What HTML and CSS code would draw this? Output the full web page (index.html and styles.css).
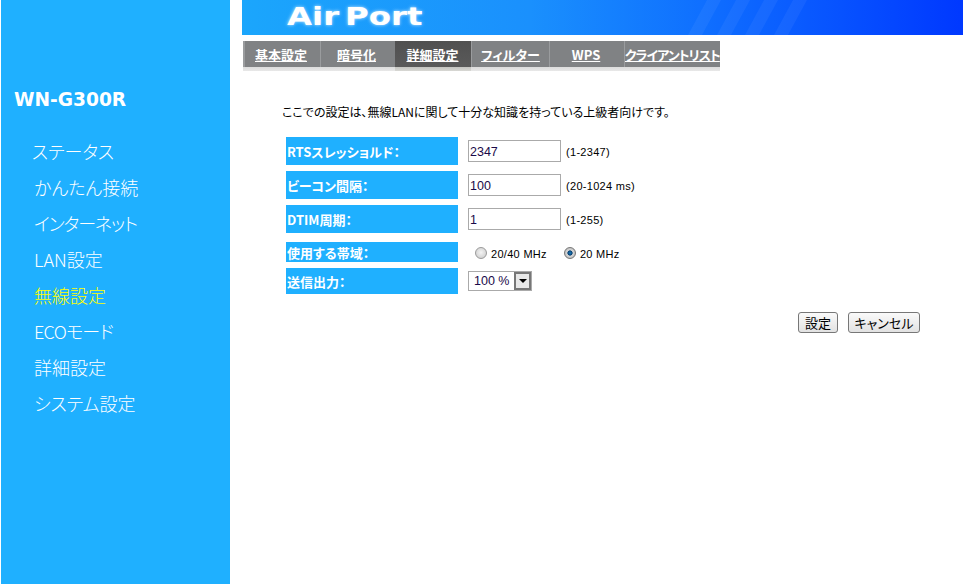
FILE: index.html
```html
<!DOCTYPE html>
<html lang="ja">
<head>
<meta charset="utf-8">
<title>WN-G300R</title>
<link rel="stylesheet" href="styles.css">
</head>
<body>
<aside class="sidebar">
  <h1 class="model">WN-G300R</h1>
  <ul class="menu">
    <li class="menu-first">ステータス</li>
    <li>かんたん接続</li>
    <li class="menu-tight">インターネット</li>
    <li>LAN設定</li>
    <li class="menu-current">無線設定</li>
    <li class="menu-tight-eco">ECOモード</li>
    <li>詳細設定</li>
    <li>システム設定</li>
  </ul>
</aside>
<main class="main">
  <header class="banner">
    <svg class="stripes" width="721" height="35" viewBox="0 0 721 35" aria-hidden="true">
      <polygon points="446,35 460,35 479,0 465,0"/>
      <polygon points="475,35 489,35 508,0 494,0"/>
      <polygon points="503,35 517,35 536,0 522,0"/>
      <polygon points="532,35 546,35 565,0 551,0"/>
    </svg>
    <span class="logo">Air Port</span>
  </header>
  <nav class="tabs">
    <a class="tab tab-a">基本設定</a>
    <a class="tab tab-b">暗号化</a>
    <a class="tab tab-c tab-active">詳細設定</a>
    <a class="tab tab-d">フィルター</a>
    <a class="tab tab-e">WPS</a>
    <a class="tab tab-f">クライアントリスト</a>
  </nav>
  <p class="intro">ここでの設定は、無線LANに関して十分な知識を持っている上級者向けです。</p>
  <form class="form">
    <div class="row row-1">
      <label class="label">RTSスレッショルド：</label>
      <div class="field"><input class="text" type="text" value="2347"><span class="hint">(1-2347)</span></div>
    </div>
    <div class="row row-2">
      <label class="label">ビーコン間隔：</label>
      <div class="field"><input class="text" type="text" value="100"><span class="hint">(20-1024 ms)</span></div>
    </div>
    <div class="row row-3">
      <label class="label">DTIM周期：</label>
      <div class="field"><input class="text" type="text" value="1"><span class="hint">(1-255)</span></div>
    </div>
    <div class="row row-4">
      <label class="label">使用する帯域：</label>
      <div class="field radios">
        <span class="radio"></span><span class="hint radio-text">20/40 MHz</span>
        <span class="radio radio-on"></span><span class="hint">20 MHz</span>
      </div>
    </div>
    <div class="row row-5">
      <label class="label">送信出力：</label>
      <div class="field">
        <div class="select"><span class="select-value">100 %</span><span class="select-btn"><span class="arrow"></span></span></div>
      </div>
    </div>
    <div class="actions">
      <button class="btn btn-set" type="button">設定</button>
      <button class="btn btn-cancel" type="button">キャンセル</button>
    </div>
  </form>
</main>
</body>
</html>
```

FILE: styles.css
```css
* { box-sizing: border-box; }
html, body { height: 100%; }
body {
  margin: 0;
  display: flex;
  height: 584px;
  overflow: hidden;
  background: #fff;
  font-family: "Noto Sans CJK JP", "Liberation Sans", sans-serif;
  font-feature-settings: "palt";
  color: #000;
}
.sidebar {
  width: 229px;
  margin-left: 1px;
  background: #1fb0ff;
  color: #fff;
  flex: none;
}
.model {
  margin: 89px 0 0 13px;
  font: bold 18.6px/22px "DejaVu Sans", sans-serif;
}
.menu {
  list-style: none;
  margin: 22px 0 0;
  padding: 0 0 0 33px;
  font-size: 18px;
  font-weight: 300;
  line-height: 36px;
}
.menu-first { margin-left: -2px; }
.menu-tight { letter-spacing: -1.1px; }
.menu-tight-eco { letter-spacing: -.7px; }
.menu-current { color: #ffff00; }
.main {
  margin-left: 12px;
  flex: 1;
  min-width: 0;
}
.banner {
  position: relative;
  height: 35px;
  background: linear-gradient(90deg, #1ba6fc 0%, #1a90fd 40%, #0f6fff 64%, #0038ff 100%);
  overflow: hidden;
}
.stripes { position: absolute; left: 0; top: 0; }
.stripes polygon { fill: #fff; opacity: .05; }
.logo {
  position: absolute;
  left: 45px;
  top: 2px;
  color: #fff;
  font: bold 24px/30px "DejaVu Sans", sans-serif;
  word-spacing: -4px;
  white-space: nowrap;
  transform: scaleX(1.35);
  transform-origin: left center;
  text-shadow: 0 0 3px #cfeaff;
}
.tabs {
  display: flex;
  width: 477px;
  height: 30px;
  margin: 6px 0 0 1px;
  background: linear-gradient(#808284 0, #808284 26px, #dcdcdc 26px, #e8e8e8 30px);
  font-size: 13px;
  font-weight: 700;
  color: #fff;
}
.tab {
  display: block;
  height: 26px;
  line-height: 28px;
  text-align: center;
  text-decoration: underline;
  white-space: nowrap;
  border-left: 1px solid #9a9c9e;
  overflow: hidden;
}
.tab-a { width: 77px; border-left-width: 2px; padding-right: 3px; }
.tab-b { width: 75px; padding-right: 3px; }
.tab-c { width: 76px; padding-right: 1px; }
.tab-d { width: 78px; }
.tab-e { width: 75px; padding-right: 2px; }
.tab-f { width: 96px; text-align: left; letter-spacing: -1px; }
.tab-active {
  height: 30px;
  padding-bottom: 4px;
  background: linear-gradient(#505050 0, #5a5a5a 26px, #c4c4c0 26px, #d8d8d4 30px);
  border-left: none;
}
.intro {
  margin: 33px 0 0 40px;
  font-size: 12px;
  line-height: 16px;
  height: 16px;
  white-space: nowrap;
}
.form { margin: 17px 0 0 44px; }
.row {
  display: flex;
  align-items: center;
}
.row-1 { height: 28px; margin-bottom: 6px; }
.row-2 { height: 28px; margin-bottom: 6px; }
.row-3 { height: 28px; margin-bottom: 9px; }
.row-4 { height: 20px; margin-bottom: 6px; }
.row-5 { height: 26px; }
.label {
  width: 172px;
  height: 100%;
  padding-left: 1px;
  background: #1fb0ff;
  color: #fff;
  font-size: 13px;
  font-weight: 700;
  display: flex;
  align-items: center;
  white-space: nowrap;
}
.field {
  margin-left: 10px;
  display: flex;
  align-items: center;
}
.text {
  width: 93px;
  height: 22px;
  padding: 1px 2px 0 1px;
  border: 1px solid #aaa;
  background: #fff;
  font: 12.5px "Liberation Sans", sans-serif;
  color: #1a0a4a;
  outline: none;
}
.hint {
  margin-left: 5px;
  padding-top: 2px;
  font: 11px/14px "Liberation Sans", sans-serif;
  letter-spacing: .3px;
  white-space: nowrap;
}
.radios { margin-left: 17px; padding-top: 1px; }
.radio {
  width: 12px;
  height: 12px;
  border-radius: 50%;
  border: 1px solid #9a9a9a;
  background: radial-gradient(circle at 50% 45%, #f4f4f4 0, #c8c8c8 100%);
  flex: none;
}
.radio-on {
  background: radial-gradient(circle, #1a80c0 0, #0a3f70 32%, #d8d8d8 42%, #a8a8a8 100%);
  border-color: #777;
}
.radios .hint { margin-left: 4px; }
.radios .radio-text { margin-right: 17px; }
.select {
  width: 64px;
  height: 20px;
  border: 1px solid #aaa;
  display: flex;
  align-items: center;
  justify-content: space-between;
  font: 12.5px "Liberation Sans", sans-serif;
  color: #1a0a4a;
}
.select-value { padding-left: 5px; }
.select-btn {
  width: 17px;
  height: 18px;
  border: 2px solid #777;
  background: #e8e8e8;
  display: flex;
  align-items: center;
  justify-content: center;
}
.arrow {
  width: 0;
  height: 0;
  border-left: 4px solid transparent;
  border-right: 4px solid transparent;
  border-top: 4px solid #000;
}
.actions {
  display: flex;
  justify-content: flex-end;
  gap: 10px;
  width: 634px;
  margin-top: 18px;
}
.btn {
  height: 21px;
  padding: 0;
  border: 1px solid #777;
  border-radius: 3px;
  background: linear-gradient(#fafafa, #e2e2e2);
  font-size: 13px;
  line-height: 17px;
  font-family: "Noto Sans CJK JP", sans-serif;
  font-feature-settings: "palt";
  color: #000;
}
.btn-set { width: 40px; }
.btn-cancel { width: 72px; }
```
